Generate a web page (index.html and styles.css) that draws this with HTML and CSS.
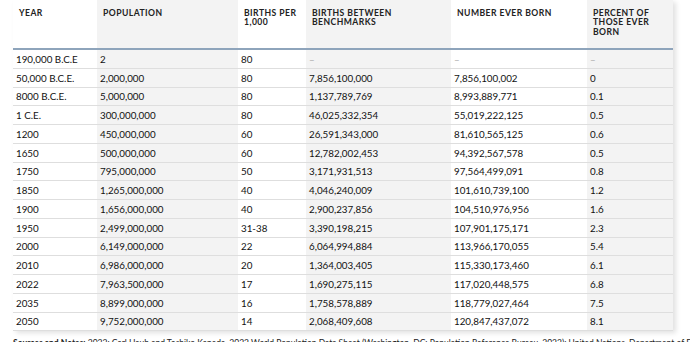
FILE: index.html
```html
<!DOCTYPE html>
<html>
<head>
	<title>Number of people who have ever lived</title>
	<link rel="stylesheet" href="styles.css">
</head>
<body>
	<div class="card">
		<table class="data">
			<colgroup>
				<col class="c-year">
				<col class="c-pop alt">
				<col class="c-rate">
				<col class="c-bench alt">
				<col class="c-ever">
				<col class="c-pct alt">
			</colgroup>
			<thead>
				<tr>
					<th>Year</th>
					<th>Population</th>
					<th>Births per 1,000</th>
					<th>Births between benchmarks</th>
					<th>Number ever born</th>
					<th>Percent of those ever born</th>
				</tr>
			</thead>
			<tbody>
				<tr><td>190,000 B.C.E</td><td>2</td><td>80</td><td class="none">–</td><td class="none">–</td><td class="none">–</td></tr>
				<tr><td>50,000 B.C.E.</td><td>2,000,000</td><td>80</td><td>7,856,100,000</td><td>7,856,100,002</td><td>0</td></tr>
				<tr><td>8000 B.C.E.</td><td>5,000,000</td><td>80</td><td>1,137,789,769</td><td>8,993,889,771</td><td>0.1</td></tr>
				<tr><td>1 C.E.</td><td>300,000,000</td><td>80</td><td>46,025,332,354</td><td>55,019,222,125</td><td>0.5</td></tr>
				<tr><td>1200</td><td>450,000,000</td><td>60</td><td>26,591,343,000</td><td>81,610,565,125</td><td>0.6</td></tr>
				<tr><td>1650</td><td>500,000,000</td><td>60</td><td>12,782,002,453</td><td>94,392,567,578</td><td>0.5</td></tr>
				<tr><td>1750</td><td>795,000,000</td><td>50</td><td>3,171,931,513</td><td>97,564,499,091</td><td>0.8</td></tr>
				<tr><td>1850</td><td>1,265,000,000</td><td>40</td><td>4,046,240,009</td><td>101,610,739,100</td><td>1.2</td></tr>
				<tr><td>1900</td><td>1,656,000,000</td><td>40</td><td>2,900,237,856</td><td>104,510,976,956</td><td>1.6</td></tr>
				<tr><td>1950</td><td>2,499,000,000</td><td>31-38</td><td>3,390,198,215</td><td>107,901,175,171</td><td>2.3</td></tr>
				<tr><td>2000</td><td>6,149,000,000</td><td>22</td><td>6,064,994,884</td><td>113,966,170,055</td><td>5.4</td></tr>
				<tr><td>2010</td><td>6,986,000,000</td><td>20</td><td>1,364,003,405</td><td>115,330,173,460</td><td>6.1</td></tr>
				<tr><td>2022</td><td>7,963,500,000</td><td>17</td><td>1,690,275,115</td><td>117,020,448,575</td><td>6.8</td></tr>
				<tr><td>2035</td><td>8,899,000,000</td><td>16</td><td>1,758,578,889</td><td>118,779,027,464</td><td>7.5</td></tr>
				<tr><td>2050</td><td>9,752,000,000</td><td>14</td><td>2,068,409,608</td><td>120,847,437,072</td><td>8.1</td></tr>
			</tbody>
		</table>
	</div>
	<p class="sources"><b>Sources and Notes:</b> 2022: Carl Haub and Toshiko Kaneda, 2022 World Population Data Sheet (Washington, DC: Population Reference Bureau, 2022); United Nations, Department of Economic and Social Affairs.</p>
</body>
</html>
```

FILE: styles.css
```css
body {
	margin: 0;
	background: #fff;
	color: #111;
	font-family: Lato, "Open Sans", sans-serif;
	overflow: hidden;
}

.card {
	width: 660px;
	margin-left: 13px;
	background: #fff;
	box-shadow: 3px 2px 5px rgba(0, 0, 0, 0.12);
}

.data {
	width: 660px;
	table-layout: fixed;
	border-collapse: collapse;
}

.c-year { width: 84px; }
.c-pop { width: 141px; }
.c-rate { width: 68px; }
.c-bench { width: 145px; }
.c-ever { width: 136px; }
.c-pct { width: 86px; }

.alt {
	background: #f3f3f3;
}

.data th {
	height: 39px;
	padding: 9px 6px 0 6px;
	vertical-align: top;
	text-align: left;
	font-size: 8.6px;
	line-height: 9.3px;
	font-weight: 700;
	letter-spacing: 0.45px;
	text-transform: uppercase;
	color: #222;
	border-bottom: 2px solid #8ea4bb;
}

.data td {
	height: 17.75px;
	padding: 0 3px;
	font-size: 9.8px;
	line-height: 12px;
	vertical-align: middle;
	border-bottom: 1px solid #dedede;
	white-space: nowrap;
}

.data td.none {
	color: #aaa;
}

.sources {
	margin: 7px 0 0 13px;
	font-size: 8.5px;
	line-height: 11px;
	color: #222;
	white-space: nowrap;
}
```
